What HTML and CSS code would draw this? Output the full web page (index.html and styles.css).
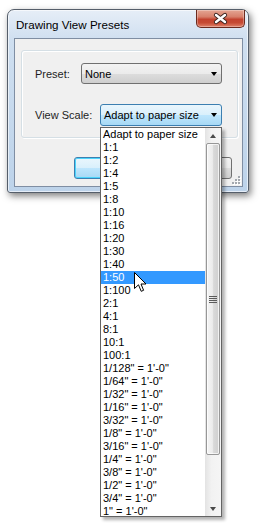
FILE: index.html
```html
<!DOCTYPE html>
<html lang="en">
<head>
    <meta charset="UTF-8">
    <meta name="viewport" content="width=device-width, initial-scale=1.0">
    <title>Drawing View Presets</title>
    <link rel="stylesheet" href="styles.css">
</head>
<body>
    <div class="window">
        <div class="titlebar">
            <span class="title">Drawing View Presets</span>
            <div class="close">
                <svg width="47" height="17" viewBox="0 0 47 17">
                    <path d="M19 5 L28 12 M28 5 L19 12" stroke="#3a2420" stroke-width="4.2" stroke-linecap="round"/>
                    <path d="M19 5 L28 12 M28 5 L19 12" stroke="#ffffff" stroke-width="2.4" stroke-linecap="round"/>
                </svg>
            </div>
        </div>

        <div class="client">
            <div class="group">
                <div class="row">
                    <span class="label label-preset">Preset:</span>
                    <div class="combo combo-preset">
                        <span>None</span>
                        <span class="arrow"></span>
                    </div>
                </div>
                <div class="row">
                    <span class="label label-scale">View Scale:</span>
                    <div class="combo combo-scale">
                        <span>Adapt to paper size</span>
                        <span class="arrow"></span>
                    </div>
                </div>
            </div>

            <!-- OK / Cancel, their captions are covered by the open list -->
            <div class="buttons">
                <div class="btn btn-default" aria-label="OK"></div>
                <div class="btn" aria-label="Cancel"></div>
            </div>

            <svg class="grip" width="10" height="10" viewBox="0 0 10 10">
                <g fill="#ffffff">
                    <rect x="8" y="2" width="2" height="2"/>
                    <rect x="8" y="5" width="2" height="2"/><rect x="5" y="5" width="2" height="2"/>
                    <rect x="8" y="8" width="2" height="2"/><rect x="5" y="8" width="2" height="2"/><rect x="2" y="8" width="2" height="2"/>
                </g>
                <g fill="#a3a8ae">
                    <rect x="7" y="1" width="2" height="2"/>
                    <rect x="7" y="4" width="2" height="2"/><rect x="4" y="4" width="2" height="2"/>
                    <rect x="7" y="7" width="2" height="2"/><rect x="4" y="7" width="2" height="2"/><rect x="1" y="7" width="2" height="2"/>
                </g>
            </svg>
        </div>
    </div>

    <!-- open list of the View Scale combo -->
    <div class="dropdown">
        <ul class="items">
            <li>Adapt to paper size</li>
            <li>1:1</li>
            <li>1:2</li>
            <li>1:4</li>
            <li>1:5</li>
            <li>1:8</li>
            <li>1:10</li>
            <li>1:16</li>
            <li>1:20</li>
            <li>1:30</li>
            <li>1:40</li>
            <li class="selected">1:50</li>
            <li>1:100</li>
            <li>2:1</li>
            <li>4:1</li>
            <li>8:1</li>
            <li>10:1</li>
            <li>100:1</li>
            <li>1/128" = 1'-0"</li>
            <li>1/64" = 1'-0"</li>
            <li>1/32" = 1'-0"</li>
            <li>1/16" = 1'-0"</li>
            <li>3/32" = 1'-0"</li>
            <li>1/8" = 1'-0"</li>
            <li>3/16" = 1'-0"</li>
            <li>1/4" = 1'-0"</li>
            <li>3/8" = 1'-0"</li>
            <li>1/2" = 1'-0"</li>
            <li>3/4" = 1'-0"</li>
            <li>1" = 1'-0"</li>
        </ul>
        <div class="scrollbar">
            <div class="scroll-btn"><span class="tri-up"></span></div>
            <div class="thumb">
                <svg width="8" height="7" viewBox="0 0 8 7">
                    <g fill="#5a5a5a">
                        <rect x="0" y="0" width="8" height="1"/>
                        <rect x="0" y="2" width="8" height="1"/>
                        <rect x="0" y="4" width="8" height="1"/>
                        <rect x="0" y="6" width="8" height="1"/>
                    </g>
                </svg>
            </div>
            <div class="track-rest"></div>
            <div class="scroll-btn"><span class="tri-down"></span></div>
        </div>
    </div>

    <svg class="cursor" width="13" height="21" viewBox="0 0 13 21">
        <path d="M0.5 0.5 L0.5 16.5 L4.5 12.8 L7.2 19.3 L9.6 18.3 L7 12 L12 12 Z" fill="#ffffff" stroke="#000000" stroke-width="1" stroke-linejoin="miter"/>
    </svg>
</body>
</html>
```

FILE: styles.css
```css
body {
    margin: 0;
    background: #ffffff;
    font-family: 'Liberation Sans', Arial, sans-serif;
    font-size: 11px;
    color: #1e1e1e;
    width: 260px;
    height: 524px;
    overflow: hidden;
}

.window {
    box-sizing: border-box;
    width: 242px;
    height: 184px;
    margin: 9px 0 0 7px;
    border: 1px solid #555e6a;
    border-radius: 7px 7px 3px 3px;
    background: linear-gradient(to bottom, #e6eef7 0%, #cfdff0 30px, #bdd3ea 100%);
    box-shadow: 2px 3px 7px rgba(0,0,0,0.5), inset 0 0 0 1px rgba(255,255,255,0.6);
}

.titlebar {
    height: 28px;
    display: flex;
    justify-content: space-between;
    align-items: center;
}

.title {
    padding-left: 8px;
    font-size: 11.6px;
    color: #000000;
}

.close {
    align-self: flex-start;
    width: 47px;
    height: 17px;
    margin-right: 3px;
    border: 1px solid #6b2a1e;
    border-top: none;
    border-radius: 0 0 5px 5px;
    background: linear-gradient(to bottom, #e4a593 0%, #d7806b 40%, #c3432f 55%, #c64a33 75%, #e0826a 100%);
    box-shadow: inset 0 0 0 1px rgba(255,255,255,0.3);
}

.close svg {
    display: block;
}

.client {
    position: relative;
    box-sizing: border-box;
    height: 149px;
    margin: 0 5px 0 6px;
    border: 1px solid #7f8ea3;
    background: #f0f0f0;
}

.group {
    box-sizing: border-box;
    height: 88px;
    margin: 11px 4px 0 6px;
    padding: 12px 0 0 13px;
    border: 1px solid #d5dfe5;
    border-radius: 3px;
    box-shadow: inset 1px 1px 0 #ffffff, 1px 1px 0 #ffffff;
    display: flex;
    flex-direction: column;
    gap: 20px;
}

.row {
    display: flex;
    align-items: center;
}

.label {
    color: #1e1e1e;
}

.label-preset { width: 46px; }
.label-scale { width: 65px; }

.combo {
    box-sizing: border-box;
    display: flex;
    justify-content: space-between;
    align-items: center;
    padding: 0 4px 0 3px;
    border-radius: 3px;
    color: #000000;
}

.combo-preset {
    width: 141px;
    height: 21px;
    border: 1px solid #707070;
    background: linear-gradient(to bottom, #f3f3f3 0%, #ebebeb 50%, #dddddd 51%, #cfcfcf 100%);
}

.combo-scale {
    width: 122px;
    height: 22px;
    border: 1px solid #3c7fb1;
    background: linear-gradient(to bottom, #eaf6fd 0%, #d9f0fc 50%, #bee6fd 51%, #a7d9f5 100%);
}

.arrow {
    width: 0;
    height: 0;
    border-left: 3.5px solid transparent;
    border-right: 3.5px solid transparent;
    border-top: 4px solid #000000;
}

.buttons {
    display: flex;
    gap: 8px;
    margin: 19px 0 0 59px;
}

.btn {
    box-sizing: border-box;
    width: 75px;
    height: 22px;
    border: 1px solid #707070;
    border-radius: 3px;
    background: linear-gradient(to bottom, #f2f2f2 0%, #ebebeb 50%, #dddddd 51%, #cfcfcf 100%);
}

.btn-default {
    border-color: #3c7fb1;
    background: linear-gradient(to bottom, #eaf6fd 0%, #d9f0fc 50%, #bee6fd 51%, #a7d9f5 100%);
    box-shadow: inset 0 0 0 1px #4cd4fb;
}

.grip {
    position: absolute;
    right: 1px;
    bottom: 1px;
}

.dropdown {
    position: absolute;
    left: 100px;
    top: 127px;
    box-sizing: border-box;
    width: 122px;
    height: 390px;
    border: 1px solid #646464;
    background: #ffffff;
    box-shadow: 3px 3px 3px rgba(0,0,0,0.3);
    display: flex;
    overflow: hidden;
}

.items {
    flex: 1;
    margin: 0;
    padding: 0;
    list-style: none;
    overflow: hidden;
}

.items li {
    height: 13px;
    line-height: 13px;
    padding-left: 2px;
    white-space: nowrap;
    color: #000000;
}

.items li.selected {
    background: #3399ff;
    color: #ffffff;
}

.scrollbar {
    width: 16px;
    display: flex;
    flex-direction: column;
    background: linear-gradient(to right, #e3e3e3 0%, #f2f2f2 40%, #f5f5f5 100%);
}

.scroll-btn {
    height: 15px;
    display: flex;
    align-items: center;
    justify-content: center;
}

.tri-up,
.tri-down {
    width: 0;
    height: 0;
    border-left: 3.5px solid transparent;
    border-right: 3.5px solid transparent;
}

.tri-up { border-bottom: 4px solid #4a4a4a; }
.tri-down { border-top: 4px solid #4a4a4a; }

.thumb {
    box-sizing: border-box;
    height: 312px;
    margin: 0 1px 0 1px;
    border: 1px solid #979797;
    border-radius: 2px;
    background: linear-gradient(to right, #f4f4f4 0%, #ececec 45%, #d9d9d9 55%, #cfcfcf 100%);
    box-shadow: inset 0 0 0 1px rgba(255,255,255,0.7);
    display: flex;
    align-items: center;
    justify-content: center;
}

.track-rest {
    flex: 1;
}

.cursor {
    position: absolute;
    left: 134px;
    top: 272px;
}
```
